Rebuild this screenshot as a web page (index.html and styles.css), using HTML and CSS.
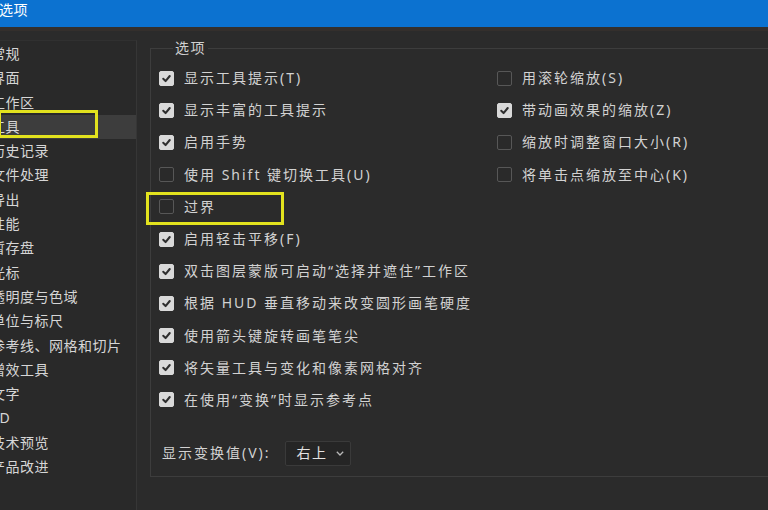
FILE: index.html
```html
<!DOCTYPE html>
<html lang="zh-CN">
<head>
<meta charset="utf-8">
<title>选项</title>
<link rel="stylesheet" href="styles.css">
</head>
<body>
<div class="window">
  <div class="titlebar"><span class="title">选项</span></div>
  <div class="strip"></div>
  <div class="body">
    <nav class="sidebar">
      <div class="nav-item">常规</div>
      <div class="nav-item">界面</div>
      <div class="nav-item">工作区</div>
      <div class="nav-item active">工具<span class="mark mark-nav"></span></div>
      <div class="nav-item">历史记录</div>
      <div class="nav-item">文件处理</div>
      <div class="nav-item">导出</div>
      <div class="nav-item">性能</div>
      <div class="nav-item">暂存盘</div>
      <div class="nav-item">光标</div>
      <div class="nav-item">透明度与色域</div>
      <div class="nav-item">单位与标尺</div>
      <div class="nav-item">参考线、网格和切片</div>
      <div class="nav-item">增效工具</div>
      <div class="nav-item">文字</div>
      <div class="nav-item">3D</div>
      <div class="nav-item">技术预览</div>
      <div class="nav-item">产品改进</div>
    </nav>
    <main class="main">
      <fieldset class="group">
        <legend class="legend">选项</legend>
        <div class="cols">
          <div class="col col-left">
            <div class="opt"><span class="cb on"><svg viewBox="0 0 14 14"><polyline points="3.5,7.3 6,9.8 10.5,4.3"/></svg></span><span class="lbl">显示工具提示(T)</span></div>
            <div class="opt"><span class="cb on"><svg viewBox="0 0 14 14"><polyline points="3.5,7.3 6,9.8 10.5,4.3"/></svg></span><span class="lbl">显示丰富的工具提示</span></div>
            <div class="opt"><span class="cb on"><svg viewBox="0 0 14 14"><polyline points="3.5,7.3 6,9.8 10.5,4.3"/></svg></span><span class="lbl">启用手势</span></div>
            <div class="opt"><span class="cb"></span><span class="lbl">使用 Shift 键切换工具(U)</span></div>
            <div class="opt"><span class="cb"></span><span class="lbl">过界</span><span class="mark mark-opt"></span></div>
            <div class="opt"><span class="cb on"><svg viewBox="0 0 14 14"><polyline points="3.5,7.3 6,9.8 10.5,4.3"/></svg></span><span class="lbl">启用轻击平移(F)</span></div>
            <div class="opt"><span class="cb on"><svg viewBox="0 0 14 14"><polyline points="3.5,7.3 6,9.8 10.5,4.3"/></svg></span><span class="lbl">双击图层蒙版可启动“选择并遮住”工作区</span></div>
            <div class="opt"><span class="cb on"><svg viewBox="0 0 14 14"><polyline points="3.5,7.3 6,9.8 10.5,4.3"/></svg></span><span class="lbl">根据 HUD 垂直移动来改变圆形画笔硬度</span></div>
            <div class="opt"><span class="cb on"><svg viewBox="0 0 14 14"><polyline points="3.5,7.3 6,9.8 10.5,4.3"/></svg></span><span class="lbl">使用箭头键旋转画笔笔尖</span></div>
            <div class="opt"><span class="cb on"><svg viewBox="0 0 14 14"><polyline points="3.5,7.3 6,9.8 10.5,4.3"/></svg></span><span class="lbl">将矢量工具与变化和像素网格对齐</span></div>
            <div class="opt"><span class="cb on"><svg viewBox="0 0 14 14"><polyline points="3.5,7.3 6,9.8 10.5,4.3"/></svg></span><span class="lbl">在使用“变换”时显示参考点</span></div>
          </div>
          <div class="col col-right">
            <div class="opt"><span class="cb"></span><span class="lbl">用滚轮缩放(S)</span></div>
            <div class="opt"><span class="cb on"><svg viewBox="0 0 14 14"><polyline points="3.5,7.3 6,9.8 10.5,4.3"/></svg></span><span class="lbl">带动画效果的缩放(Z)</span></div>
            <div class="opt"><span class="cb"></span><span class="lbl">缩放时调整窗口大小(R)</span></div>
            <div class="opt"><span class="cb"></span><span class="lbl">将单击点缩放至中心(K)</span></div>
          </div>
        </div>
        <div class="transform-row">
          <span class="lbl">显示变换值(V):</span>
          <div class="select"><span class="sel-text">右上</span><svg class="chev" viewBox="0 0 8 5"><polyline points="0.8,0.8 4,4 7.2,0.8"/></svg></div>
        </div>
      </fieldset>
    </main>
  </div>
</div>
</body>
</html>
```

FILE: styles.css
```css
html, body {
  margin: 0;
  padding: 0;
  background: #2b2b2b;
}

.window {
  width: 768px;
  height: 510px;
  overflow: hidden;
  background: #2b2b2b;
  font-family: "Noto Sans", "Noto Sans CJK SC", sans-serif;
  color: #d2d2d2;
}

.titlebar {
  height: 27px;
  background: #0c72d0;
}

.title {
  display: block;
  margin-left: -1px;
  line-height: 20px;
  font-size: 14px;
  color: #ffffff;
  letter-spacing: 0.5px;
}

.strip {
  height: 4px;
  background: #342f2c;
}

.body {
  display: flex;
  height: 479px;
}

.sidebar {
  flex: none;
  width: 136px;
  margin-top: 9px;
  padding-top: 1px;
  background: #292929;
  border-right: 1px solid #363636;
  border-top: 1px solid #303030;
}

.nav-item {
  position: relative;
  height: 24.3px;
  line-height: 24.3px;
  font-size: 14px;
  letter-spacing: 0.5px;
  text-indent: -9px;
  white-space: nowrap;
  color: #d6d6d6;
}

.nav-item.active {
  background: #3d3d3d;
}

.mark {
  position: absolute;
  border: 3px solid #e2e21e;
  box-sizing: border-box;
  pointer-events: none;
}

.mark-nav {
  left: -2px;
  top: -5px;
  width: 100px;
  height: 28px;
}

.main {
  flex: none;
  width: 640px;
  padding-left: 13px;
}

.group {
  width: 700px;
  margin: 7px 0 0 0;
  padding: 4px 0 10px 8px;
  border: 1px solid #3d3d3d;
  box-sizing: border-box;
}

.legend {
  margin-left: 14px;
  padding: 0 2px;
  line-height: 20px;
  font-size: 14px;
  letter-spacing: 1.5px;
  color: #d0d0d0;
}

.cols {
  display: grid;
  grid-template-columns: 338px auto;
}

.col {
  display: flex;
  flex-direction: column;
}

.opt {
  position: relative;
  display: flex;
  align-items: center;
  gap: 10px;
  height: 32.2px;
}

.lbl {
  font-size: 14px;
  letter-spacing: 2px;
  white-space: nowrap;
  line-height: 20px;
}

.cb {
  flex: none;
  width: 15px;
  height: 15px;
  box-sizing: border-box;
  border: 1px solid #575757;
  border-radius: 2px;
  background: #2a2a2a;
  display: flex;
}

.cb.on {
  background: #d9d9d9;
  border-color: #d9d9d9;
}

.cb svg {
  width: 13px;
  height: 13px;
  fill: none;
  stroke: #2e2e2e;
  stroke-width: 2.2;
  stroke-linecap: round;
  stroke-linejoin: round;
}

.mark-opt {
  left: -13px;
  top: 1px;
  width: 138px;
  height: 33px;
}

.transform-row {
  display: flex;
  align-items: center;
  gap: 14px;
  margin-top: 24px;
  margin-left: 3px;
  height: 26px;
}

.select {
  display: flex;
  align-items: center;
  justify-content: space-between;
  width: 66px;
  height: 25px;
  box-sizing: border-box;
  padding: 0 6px 0 11px;
  background: #252525;
  border: 1px solid #3a3a3a;
  border-radius: 2px;
}

.sel-text {
  font-size: 14px;
  letter-spacing: 1.5px;
  color: #e2e2e2;
  line-height: 20px;
}

.chev {
  width: 8px;
  height: 5px;
  fill: none;
  stroke: #b8b8b8;
  stroke-width: 1.3;
}
```
